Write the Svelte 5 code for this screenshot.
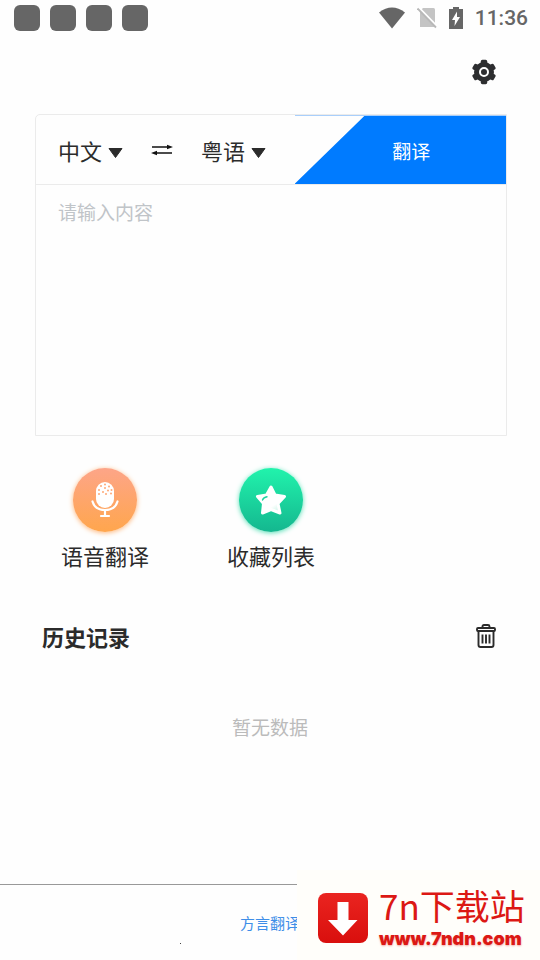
<script>
  let from = $state("中文");
  let to = $state("粤语");
  let content = $state("");

  const notices = [1, 2, 3, 4];
  const languages = ["中文", "粤语"];

  function swap() {
    const old = from;
    from = to;
    to = old;
  }
</script>

<div class="page">
  <div class="status">
    <div class="notices">
      {#each notices as n (n)}
        <span class="notice"></span>
      {/each}
    </div>
    <div class="system">
      <svg class="wifi" width="26" height="22" viewBox="0 0 26 22">
        <path d="M0 5.500Q13-4.500 26 5.500L13 21.500Z" fill="#666" />
      </svg>
      <svg class="sim" width="20" height="22" viewBox="0 0 20 22">
        <path d="M6 1H16.500Q18 1 18 2.500V20H3V4Z" fill="#c4c4c4" />
        <path d="M1 0L20 19.500" stroke="#fff" stroke-width="2.500" />
        <path d="M.5 1.500L19 20.500" stroke="#b8b8b8" stroke-width="1.800" />
      </svg>
      <svg class="battery" width="14" height="22" viewBox="0 0 14 22">
        <path d="M4 0H10V2H14V22H0V2H4Z" fill="#666" />
        <path d="M8 4.500L3 13H6L5.500 19L11 10H8Z" fill="#fff" />
      </svg>
      <span class="time">11:36</span>
    </div>
  </div>

  <header>
    <button class="icon" aria-label="设置">
      <svg width="24" height="26" viewBox="0 0 24 26">
        <g fill="#2d2e30">
          <circle cx="12" cy="13" r="10" />
          {#each [0, 60, 120] as deg (deg)}
            <rect x="8.800" y="0.800" width="6.400" height="24.400" rx="1.600" transform="rotate({deg} 12 13)" />
          {/each}
        </g>
        <circle cx="12" cy="13" r="4" fill="#2d2e30" stroke="#fff" stroke-width="2" />
      </svg>
    </button>
  </header>

  <main>
    <section class="card">
      <div class="bar">
        <div class="langs">
          <label class="lang">
            <select aria-label="源语言" bind:value={from}>
              {#each languages as l (l)}
                <option>{l}</option>
              {/each}
            </select>
            <svg width="15" height="10" viewBox="0 0 15 10"><path d="M1 .5H14L7.500 9.500Z" fill="#2b2b2b" stroke="#2b2b2b" stroke-linejoin="round" /></svg>
          </label>
          <button class="icon swap" aria-label="交换语言" onclick={swap}>
            <svg width="22" height="12" viewBox="0 0 22 12">
              <path d="M1 3H17M5 9H21" stroke="#111" stroke-width="1.500" />
              <path d="M16 .8L22 3L16 5.200ZM6 6.800L0 9L6 11.200Z" fill="#111" />
            </svg>
          </button>
          <label class="lang">
            <select aria-label="目标语言" bind:value={to}>
              {#each languages as l (l)}
                <option>{l}</option>
              {/each}
            </select>
            <svg width="15" height="10" viewBox="0 0 15 10"><path d="M1 .5H14L7.500 9.500Z" fill="#2b2b2b" stroke="#2b2b2b" stroke-linejoin="round" /></svg>
          </label>
        </div>
        <button class="translate">翻译</button>
      </div>
      <textarea aria-label="输入内容" placeholder="请输入内容" bind:value={content}></textarea>
    </section>

    <nav class="tools">
      <a class="tool" href="#voice">
        <span class="disc voice">
          <svg width="28" height="36" viewBox="0 0 28 36">
            <rect x="5" y="0" width="18" height="26" rx="9" fill="#fff" />
            <path d="M1.500 19.500Q4 28 14 28T26.500 19.500" fill="none" stroke="#fff" stroke-width="2.200" stroke-linecap="round" />
            <path d="M14 28V34M10 34H18" stroke="#fff" stroke-width="2.200" stroke-linecap="round" />
            <g fill="#ffa876">
              <circle cx="10" cy="4" r="1" /><circle cx="14" cy="2.500" r="1" /><circle cx="18" cy="4.500" r="1" />
              <circle cx="14" cy="6" r="1" /><circle cx="8" cy="8" r="1" /><circle cx="12" cy="10" r="1" />
              <circle cx="17" cy="8.500" r="1" /><circle cx="20.500" cy="8" r="1" /><circle cx="8" cy="12" r="1" />
              <circle cx="15" cy="12" r="1" /><circle cx="20" cy="11.500" r="1" />
            </g>
          </svg>
        </span>
        语音翻译
      </a>
      <a class="tool" href="#favorites">
        <span class="disc star">
          <svg width="32" height="32" viewBox="0 0 32 32">
            <defs>
              <linearGradient id="fade" x1="0.400" y1="0.400" x2="0.800" y2="1">
                <stop offset="0.500" stop-color="#fff" />
                <stop offset="1" stop-color="#c0f3e2" />
              </linearGradient>
            </defs>
            <path d="M16 3L20 11L29.500 12.500L23 19.500L25 29L16 25.500L7.500 29L8.500 19.500L2.500 12.500L11.500 11Z" fill="url(#fade)" stroke="#fff" stroke-width="3" stroke-linejoin="round" />
            <path d="M7.500 16Q8.500 13.500 12 12.800" fill="none" stroke="#1fd39f" stroke-width="1.400" stroke-linecap="round" />
          </svg>
        </span>
        收藏列表
      </a>
    </nav>

    <section class="history">
      <div class="title">
        <h2>历史记录</h2>
        <button class="icon" aria-label="清空">
          <svg width="20" height="24" viewBox="0 0 20 24" fill="none" stroke="#2b2b2b" stroke-width="1.900" stroke-linejoin="round">
            <path d="M6.500 4V2.500Q6.500 1 8 1H12Q13.500 1 13.500 2.500V4" />
            <rect x="1" y="4" width="18" height="3" rx="1" />
            <path d="M2.500 7V21Q2.500 23 4.500 23H15.500Q17.500 23 17.500 21V7M6.500 10.500V19.500M10 10.500V19.500M13.500 10.500V19.500" />
          </svg>
        </button>
      </div>
      <p class="empty">暂无数据</p>
    </section>
  </main>

  <footer>
    <a href="#dialect">方言翻译</a>
    <span class="dot"></span>
  </footer>

  <aside class="badge">
    <svg width="52" height="52" viewBox="0 0 52 52">
      <defs>
        <linearGradient id="red" x1="0" y1="0" x2="0" y2="1">
          <stop offset="0" stop-color="#ea2420" />
          <stop offset="1" stop-color="#d90f0d" />
        </linearGradient>
      </defs>
      <rect x="1" y="1" width="50" height="50" rx="8" fill="url(#red)" />
      <path d="M20.500 10H31.500V28H40.500L26 43.500L11 28H20.500Z" fill="#fff" />
    </svg>
    <div class="site">
      <span class="name">7n下载站</span>
      <span class="url">www.7ndn.com</span>
    </div>
  </aside>
</div>

<style>
  :global(body) {
    background: #fefefe;
  }
  .page {
    position: relative;
    display: flex;
    flex-direction: column;
    min-height: 100vh;
    color: #2b2b2b;
    font-family: "Noto Sans CJK SC", sans-serif;
    font-size: 22px;
  }
  svg {
    display: block;
    flex: none;
  }
  button {
    font: inherit;
    border: 0;
    padding: 0;
    cursor: pointer;
  }
  .icon {
    background: none;
  }
  a {
    text-decoration: none;
  }
  .status {
    display: flex;
    justify-content: space-between;
    align-items: center;
    height: 36px;
    padding: 0 12px 0 14px;
  }
  .notices {
    display: flex;
    gap: 10px;
  }
  .notice {
    width: 26px;
    height: 26px;
    border-radius: 6px;
    background: #666;
  }
  .system {
    display: flex;
    align-items: center;
    gap: 12px;
  }
  .time {
    font: 500 21px/26px Roboto, sans-serif;
    color: #666;
  }
  header {
    display: flex;
    justify-content: flex-end;
    padding: 23px 44px 29px;
  }
  .card {
    margin: 0 33px 0 35px;
    border: 1px solid #ebebeb;
    border-radius: 5px 0 0 0;
  }
  .bar {
    display: flex;
    height: 69px;
    border-bottom: 1px solid #ebebeb;
  }
  .langs {
    flex: 1;
    display: flex;
    align-items: center;
    padding-left: 22px;
  }
  .lang {
    display: flex;
    align-items: center;
    gap: 6px;
  }
  .lang svg {
    margin-top: 6px;
  }
  .swap {
    margin: 0 28px;
  }
  select {
    appearance: none;
    width: 44px;
    padding: 0;
    border: 0;
    background: none;
    color: inherit;
    font: inherit;
  }
  .translate {
    width: 45%;
    padding-left: 22px;
    border-top: 1px solid #a9cffb;
    background: #007bff;
    color: #fff;
    font-size: 19px;
    /* slanted left edge, the top border keeps its full width */
    clip-path: polygon(0 0, 100% 0, 100% 100%, 0 100%, 33% 1px, 0 1px);
  }
  textarea {
    display: block;
    box-sizing: border-box;
    width: 100%;
    height: 250px;
    padding: 13px 22px;
    border: 0;
    background: none;
    resize: none;
    color: inherit;
    font: inherit;
    font-size: 19px;
    line-height: 28px;
  }
  textarea::placeholder {
    color: #c0c4c8;
  }
  .tools {
    display: grid;
    grid-template-columns: repeat(3, 1fr);
    margin: 32px 20px 0 22px;
  }
  .tool {
    display: flex;
    flex-direction: column;
    align-items: center;
    gap: 7px;
    color: #2b2b2b;
    line-height: 32px;
  }
  .disc {
    display: flex;
    align-items: center;
    justify-content: center;
    width: 64px;
    height: 64px;
    border-radius: 50%;
  }
  .voice {
    background: linear-gradient(#fda588, #ffa64d);
    box-shadow: 0 1px 5px #ffb67a;
  }
  .star {
    background: linear-gradient(#21f3ac, #14b78f);
    box-shadow: 0 1px 5px #55e0b6;
  }
  .title {
    display: flex;
    justify-content: space-between;
    align-items: center;
    padding: 0 44px 0 42px;
    margin-top: 48px;
  }
  h2 {
    margin: 0;
    font-size: 22px;
    font-weight: 700;
    line-height: 34px;
  }
  .empty {
    margin: 60px 0;
    color: #bbb;
    font-size: 19px;
    line-height: 28px;
    text-align: center;
  }
  footer {
    position: relative;
    height: 75px;
    margin-top: auto;
    border-top: 1px solid #999;
    display: flex;
    align-items: center;
    justify-content: center;
  }
  footer a {
    color: #3e8ee8;
    font-size: 15px;
    line-height: 22px;
  }
  .dot {
    position: absolute;
    left: 33.333%;
    bottom: 16px;
    width: 1px;
    height: 1px;
    background: #444;
  }
  .badge {
    position: absolute;
    right: 0;
    bottom: 0;
    display: flex;
    align-items: center;
    gap: 10px;
    box-sizing: border-box;
    width: 243px;
    height: 90px;
    padding: 6px 0 0 20px;
    background: #fffefa;
  }
  .site {
    display: flex;
    flex-direction: column;
    color: #dc1814;
    white-space: nowrap;
  }
  .name {
    font-size: 35px;
    line-height: 40px;
  }
  .url {
    padding-top: 2px;
    font: 900 18px/24px Inter, sans-serif;
    text-shadow: 0 1px 2px #f0a8a0;
  }
</style>
